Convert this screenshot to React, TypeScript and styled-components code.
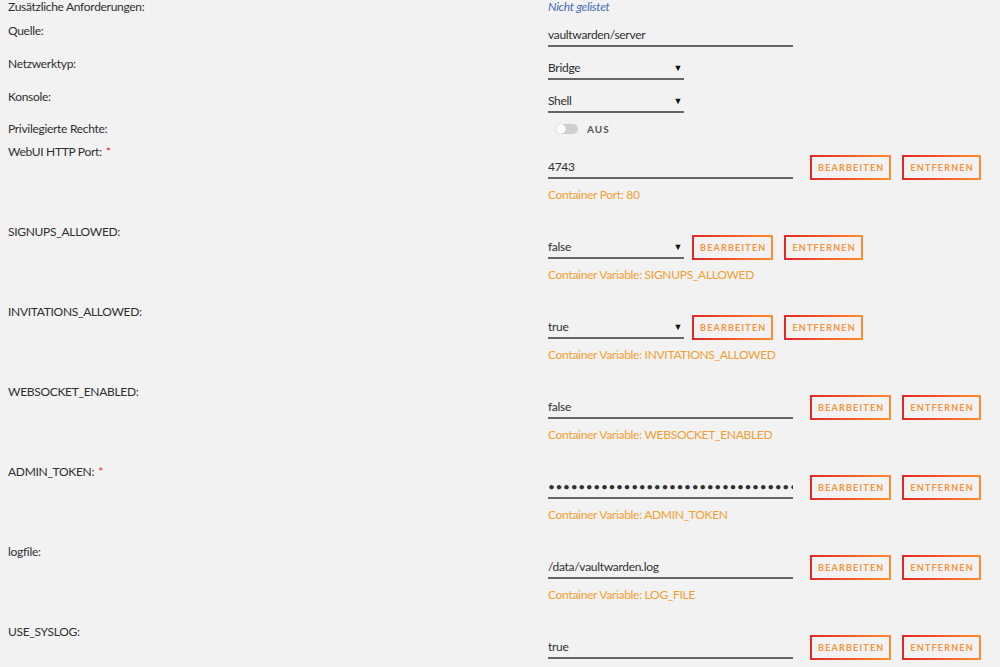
import React from 'react';
import styled, { createGlobalStyle } from 'styled-components';

const GlobalStyle = createGlobalStyle`
  body {
    margin: 0;
    background: #f2f2f2;
    font-family: Lato, "Liberation Sans", sans-serif;
    font-size: 12px;
    letter-spacing: -0.3px;
    color: #303030;
  }
`;

const Page = styled.div`
  padding: 0 8px;
`;

const InfoRow = styled.div<{ $gap: number }>`
  display: grid;
  grid-template-columns: 540px 1fr;
  line-height: 14px;
  margin-bottom: ${(p) => p.$gap}px;
`;

const Label = styled.div`
  line-height: 14px;
`;

const Required = styled.span`
  color: #e22828;
  font-size: 12px;
  vertical-align: top;
  margin-left: 4px;
`;

const Muted = styled.span`
  color: #486dba;
  font-style: italic;
`;

const Field = styled.input<{ $width: number }>`
  box-sizing: content-box;
  width: ${(p) => p.$width}px;
  height: 14px;
  padding: 4px 0 3px;
  margin: 0;
  border: none;
  border-bottom: 2px solid #666;
  background: transparent;
  font: inherit;
  letter-spacing: inherit;
  line-height: 14px;
  color: #303030;
  outline: none;

  &[type='password'] {
    letter-spacing: 0.6px;
  }
`;

const SelectBox = styled.div<{ $width: number }>`
  display: flex;
  align-items: center;
  justify-content: space-between;
  width: ${(p) => p.$width}px;
  height: 14px;
  padding: 4px 0 3px;
  border-bottom: 2px solid #666;
  line-height: 14px;
  color: #303030;
`;

const Caret = styled.span`
  font-size: 9px;
  color: #111;
  margin-right: 2px;
`;

const Toggle = styled.div`
  display: flex;
  align-items: center;
  gap: 9px;
  padding-left: 8px;
`;

const Track = styled.span`
  position: relative;
  width: 22px;
  height: 10px;
  border-radius: 5px;
  background: #cfcfcf;
`;

const Knob = styled.span`
  position: absolute;
  left: 0;
  top: 0;
  width: 10px;
  height: 10px;
  border-radius: 50%;
  background: #fff;
  box-shadow: 0 0 1px rgba(0, 0, 0, 0.3);
`;

const ToggleText = styled.span`
  font-size: 10px;
  font-weight: 700;
  letter-spacing: 1px;
  color: #555;
`;

const VarRow = styled.div`
  display: grid;
  grid-template-columns: 540px 1fr;
  height: 80px;
`;

const Controls = styled.div`
  display: flex;
  align-items: center;
  height: 25px;
  margin-top: 10px;
`;

const Button = styled.button<{ $first?: boolean; $spaced?: boolean }>`
  box-sizing: border-box;
  height: 25px;
  padding: 0 5px 0 6px;
  margin-left: ${(p) => (p.$first ? (p.$spaced ? 17 : 8) : 11)}px;
  border: 2px solid;
  border-image: linear-gradient(90deg, #e22828 0, #ff8c2f) 1;
  background: transparent;
  color: #f7923d;
  font-family: Lato, "Liberation Sans", sans-serif;
  font-size: 9px;
  font-weight: 700;
  letter-spacing: 1.2px;
  text-transform: uppercase;
  cursor: pointer;
`;

const Hint = styled.div`
  margin-top: 8px;
  line-height: 14px;
  color: #f0a030;
`;

interface Variable {
  label: string;
  required?: boolean;
  value: string;
  kind: 'input' | 'select' | 'password';
  hint?: string;
}

const variables: Variable[] = [
  { label: 'WebUI HTTP Port:', required: true, value: '4743', kind: 'input', hint: 'Container Port: 80' },
  { label: 'SIGNUPS_ALLOWED:', value: 'false', kind: 'select', hint: 'Container Variable: SIGNUPS_ALLOWED' },
  { label: 'INVITATIONS_ALLOWED:', value: 'true', kind: 'select', hint: 'Container Variable: INVITATIONS_ALLOWED' },
  { label: 'WEBSOCKET_ENABLED:', value: 'false', kind: 'input', hint: 'Container Variable: WEBSOCKET_ENABLED' },
  { label: 'ADMIN_TOKEN:', required: true, value: 'x'.repeat(60), kind: 'password', hint: 'Container Variable: ADMIN_TOKEN' },
  { label: 'logfile:', value: '/data/vaultwarden.log', kind: 'input', hint: 'Container Variable: LOG_FILE' },
  { label: 'USE_SYSLOG:', value: 'true', kind: 'input' },
];

function VariableRow ({ item }: { item: Variable }): React.ReactElement {
  const isSelect = item.kind === 'select';

  return (
    <VarRow>
      <Label>
        {item.label}
        {item.required && <Required>*</Required>}
      </Label>
      <div>
        <Controls>
          {isSelect
            ? (
              <SelectBox $width={136}>
                {item.value}
                <Caret>▼</Caret>
              </SelectBox>
            )
            : (
              <Field
                $width={245}
                readOnly
                type={item.kind === 'password' ? 'password' : 'text'}
                value={item.value}
              />
            )}
          <Button $first $spaced={!isSelect}>Bearbeiten</Button>
          <Button>Entfernen</Button>
        </Controls>
        {item.hint && <Hint>{item.hint}</Hint>}
      </div>
    </VarRow>
  );
}

export default function App (): React.ReactElement {
  return (
    <Page>
      <GlobalStyle />
      <InfoRow $gap={10}>
        <Label>Zusätzliche Anforderungen:</Label>
        <div><Muted>Nicht gelistet</Muted></div>
      </InfoRow>
      <InfoRow $gap={10}>
        <Label>Quelle:</Label>
        <div><Field $width={245} readOnly value='vaultwarden/server' /></div>
      </InfoRow>
      <InfoRow $gap={10}>
        <Label>Netzwerktyp:</Label>
        <SelectBox $width={136}>Bridge<Caret>▼</Caret></SelectBox>
      </InfoRow>
      <InfoRow $gap={9}>
        <Label>Konsole:</Label>
        <SelectBox $width={136}>Shell<Caret>▼</Caret></SelectBox>
      </InfoRow>
      <InfoRow $gap={9}>
        <Label>Privilegierte Rechte:</Label>
        <Toggle>
          <Track><Knob /></Track>
          <ToggleText>AUS</ToggleText>
        </Toggle>
      </InfoRow>
      {variables.map((v) => <VariableRow item={v} key={v.label} />)}
    </Page>
  );
}
